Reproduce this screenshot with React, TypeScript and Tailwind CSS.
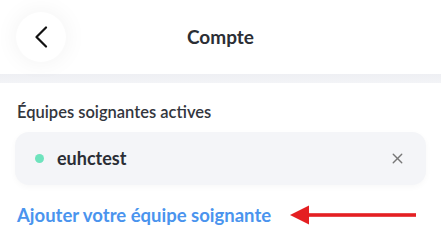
import { X } from 'lucide-react';

export default function App() {
  return (
    <div className="w-[441px] h-[245px] bg-white overflow-hidden font-['Lato','Open_Sans',sans-serif] text-[#2b2e35]">
      {/* header */}
      <div className="h-[74px] flex items-center relative">
        <button className="ml-4 w-[50px] h-[50px] rounded-full bg-white shadow-[0_0_24px_rgba(0,0,0,0.06)] flex items-center justify-center">
          <svg width="14" height="22" viewBox="0 0 14 22" fill="none">
            <path d="M12 1.5L2.5 11L12 20.5" stroke="#111" strokeWidth="2.2" strokeLinecap="round" strokeLinejoin="round" />
          </svg>
        </button>
        <h1 className="absolute left-0 right-0 text-center text-[19px] font-bold pointer-events-none">Compte</h1>
      </div>
      <div className="h-[9px] bg-gradient-to-b from-[#eeeff3] to-[#f3f4f7]" />

      <div className="px-[15px] pt-[17px]">
        <p className="pl-[2px] text-[16.5px] leading-6 font-semibold text-[#33363d]">Équipes soignantes actives</p>

        <div className="mt-[8px] h-[53px] rounded-[14px] bg-[#f4f5f8] shadow-[0_2px_6px_rgba(0,0,0,0.03)] flex items-center pl-5 pr-[20px]">
          <span className="w-[9px] h-[9px] rounded-full bg-[#6ee3bd]" />
          <span className="ml-[13px] text-[18px] font-bold flex-1">euhctest</span>
          <X size={17} strokeWidth={1.9} className="text-[#777]" />
        </div>

        <div className="mt-[18px] flex items-center">
          <span className="pl-[2px] text-[18.5px] leading-6 font-bold text-[#4a94ee]">Ajouter votre équipe soignante</span>
          <svg className="ml-[19px]" width="127" height="20" viewBox="0 0 127 20">
            <polygon points="0,10 19,0.5 19,19.5" fill="#e41f22" />
            <rect x="17" y="8.2" width="109" height="3.6" fill="#e41f22" />
          </svg>
        </div>
      </div>
    </div>
  );
}
